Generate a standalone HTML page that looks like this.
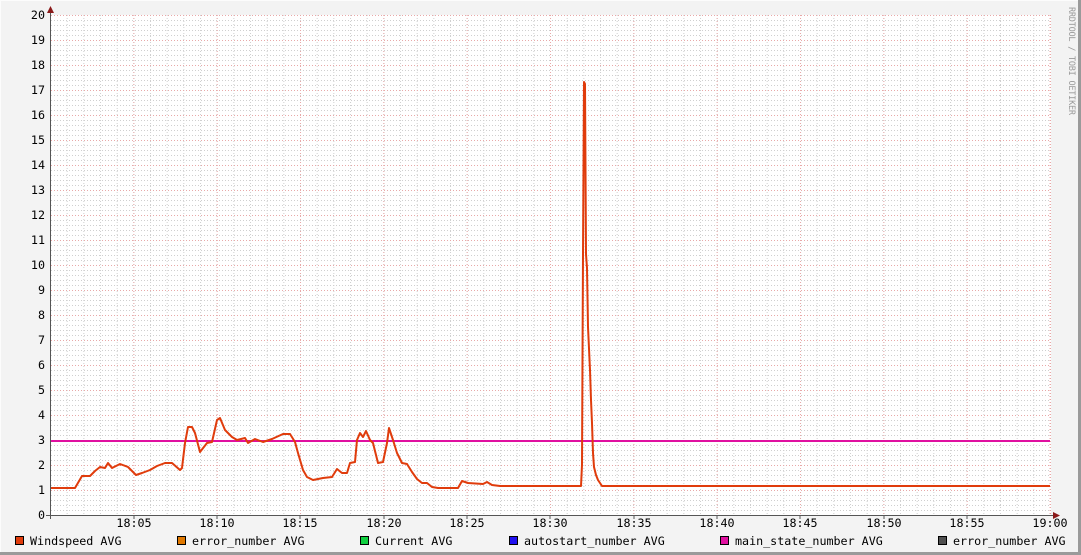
<!DOCTYPE html>
<html><head><meta charset="utf-8"><style>
html,body{margin:0;padding:0;background:#f3f3f3;}
svg{display:block;}
text{font-family:"DejaVu Sans Mono","Liberation Mono",monospace;font-size:11.7px;fill:#000;}
</style></head><body>
<svg width="1081" height="555" viewBox="0 0 1081 555" xmlns="http://www.w3.org/2000/svg">
<defs>
<pattern id="mh" x="0" y="15" width="1000" height="5" patternUnits="userSpaceOnUse"><line x1="0" y1="0.5" x2="1000" y2="0.5" stroke="#cfcfcf" stroke-dasharray="1,2"/></pattern>
<pattern id="mv" x="50" y="0" width="16.6667" height="555" patternUnits="userSpaceOnUse"><line x1="0.5" y1="0" x2="0.5" y2="555" stroke="#cfcfcf" stroke-dasharray="1,2"/></pattern>
<pattern id="Mh" x="0" y="15" width="1000" height="25" patternUnits="userSpaceOnUse"><line x1="0" y1="0.5" x2="1000" y2="0.5" stroke="#e8a8a8" stroke-dasharray="1,2"/></pattern>
<pattern id="Mv" x="50" y="0" width="83.3333" height="555" patternUnits="userSpaceOnUse"><line x1="0.5" y1="0" x2="0.5" y2="555" stroke="#e8a8a8" stroke-dasharray="1,2"/></pattern>
</defs>
<rect x="0" y="0" width="1081" height="555" fill="#f3f3f3"/>
<line x1="0" y1="0.5" x2="1081" y2="0.5" stroke="#fcfcfc"/>
<line x1="0.5" y1="0" x2="0.5" y2="555" stroke="#fcfcfc"/>
<line x1="0" y1="553.5" x2="1081" y2="553.5" stroke="#9a9a9a" stroke-width="3"/>
<line x1="1079.5" y1="0" x2="1079.5" y2="555" stroke="#9a9a9a" stroke-width="3"/>
<rect x="51" y="15" width="1000" height="500" fill="#fff"/>
<rect x="51" y="15" width="1000" height="500" fill="url(#mh)"/>
<rect x="51" y="15" width="1000" height="500" fill="url(#mv)"/>
<rect x="51" y="15" width="1000" height="500" fill="url(#Mh)"/>
<rect x="51" y="15" width="1000" height="500" fill="url(#Mv)"/>
<line x1="50" y1="441" x2="1050" y2="441" stroke="#e010a0" stroke-width="2"/>
<polyline fill="none" stroke="#e03c0c" stroke-width="2" stroke-linejoin="round" points="51,488 75,488 82,476 90,476 95,471 100,467 105,468 108,463 112,468 120,464 128,467 136,475 142,473 150,470 157,466 165,463 172,463 180,470 182,468 185,443 188,427 192,427 195,433 200,452 207,443 212,442 217,420 220,418 225,430 232,437 237,440 245,438 248,443 255,439 263,442 272,439 283,434 290,434 295,442 298,453 303,470 307,477 313,480 323,478 332,477 337,469 342,473 347,473 350,463 355,462 357,440 360,433 363,437 366,431 370,440 373,443 378,463 383,462 387,443 389,428 393,440 397,453 402,463 407,464 412,472 417,479 422,483 427,483 432,487 438,488 458,488 462,481 468,483 483,484 487,482 492,485 500,486 581,486 582,465 583,254 584,82 585,84 586,254 587,268 588,327 590,370 591,400 592,423 593,453 594,467 596,475 598,480 602,486 1050,486"/>
<line x1="50.5" y1="12" x2="50.5" y2="519" stroke="#555"/>
<line x1="46" y1="515.5" x2="1053" y2="515.5" stroke="#555"/>
<polygon points="47,13 54,13 50.5,6" fill="#8b1a1a"/>
<polygon points="1053,512 1053,519 1060,515.5" fill="#8b1a1a"/>
<g stroke="#555">
<line x1="134" y1="515" x2="134" y2="519"/><line x1="217" y1="515" x2="217" y2="519"/><line x1="300" y1="515" x2="300" y2="519"/><line x1="384" y1="515" x2="384" y2="519"/><line x1="467" y1="515" x2="467" y2="519"/><line x1="550" y1="515" x2="550" y2="519"/><line x1="634" y1="515" x2="634" y2="519"/><line x1="717" y1="515" x2="717" y2="519"/><line x1="800" y1="515" x2="800" y2="519"/><line x1="884" y1="515" x2="884" y2="519"/><line x1="967" y1="515" x2="967" y2="519"/>
</g>
<g text-anchor="end">
<text x="45" y="19">20</text><text x="45" y="44">19</text><text x="45" y="69">18</text><text x="45" y="94">17</text><text x="45" y="119">16</text><text x="45" y="144">15</text><text x="45" y="169">14</text><text x="45" y="194">13</text><text x="45" y="219">12</text><text x="45" y="244">11</text><text x="45" y="269">10</text><text x="45" y="294">9</text><text x="45" y="319">8</text><text x="45" y="344">7</text><text x="45" y="369">6</text><text x="45" y="394">5</text><text x="45" y="419">4</text><text x="45" y="444">3</text><text x="45" y="469">2</text><text x="45" y="494">1</text><text x="45" y="519">0</text>
</g>
<g text-anchor="middle">
<text x="134" y="527">18:05</text><text x="217" y="527">18:10</text><text x="300" y="527">18:15</text><text x="384" y="527">18:20</text><text x="467" y="527">18:25</text><text x="550" y="527">18:30</text><text x="634" y="527">18:35</text><text x="717" y="527">18:40</text><text x="800" y="527">18:45</text><text x="884" y="527">18:50</text><text x="967" y="527">18:55</text><text x="1050" y="527">19:00</text>
</g>
<g stroke="#000" stroke-width="1">
<rect x="15.5" y="536.5" width="8" height="8" fill="#e03c0c"/>
<rect x="177.5" y="536.5" width="8" height="8" fill="#e07800"/>
<rect x="360.5" y="536.5" width="8" height="8" fill="#10d040"/>
<rect x="509.5" y="536.5" width="8" height="8" fill="#2010f0"/>
<rect x="720.5" y="536.5" width="8" height="8" fill="#e010a0"/>
<rect x="938.5" y="536.5" width="8" height="8" fill="#505050"/>
</g>
<text x="30" y="545">Windspeed AVG</text>
<text x="192" y="545">error_number AVG</text>
<text x="375" y="545">Current AVG</text>
<text x="524" y="545">autostart_number AVG</text>
<text x="735" y="545">main_state_number AVG</text>
<text x="953" y="545">error_number AVG</text>
<text transform="translate(1069,7) rotate(90)" textLength="108" style="font-size:8.5px;fill:#999">RRDTOOL / TOBI OETIKER</text>
</svg>
</body></html>
